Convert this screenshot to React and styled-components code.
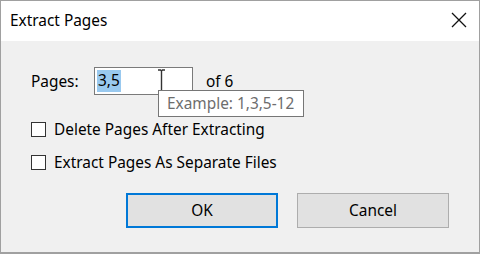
import React from "react";
import styled, { createGlobalStyle } from "styled-components";

const Global = createGlobalStyle`
  html, body { margin: 0; padding: 0; background: #ffffff; }
  body { font-family: "Noto Sans", "Open Sans", sans-serif; }
  * { box-sizing: border-box; }
`;

const Window = styled.div`
  width: 480px;
  height: 254px;
  border: 1px solid #a0a0a0;
  border-bottom: 2px solid #a0a0a0;
  display: flex;
  flex-direction: column;
  background: #f0f0f0;
  overflow: hidden;
`;

const TitleBar = styled.div`
  height: 40px;
  flex: none;
  background: #ffffff;
  display: flex;
  align-items: center;
  justify-content: space-between;
  padding: 0 12px 0 9px;
`;

const Title = styled.span`
  font-size: 15.4px;
  color: #000;
  margin-top: -2px;
`;

const CloseButton = styled.div`
  width: 16px;
  height: 16px;
  display: flex;
  align-items: center;
  justify-content: center;
  margin-top: -2px;
`;

const Body = styled.div`
  flex: 1;
  display: flex;
  flex-direction: column;
  padding: 26px 30px 0 29px;
  font-size: 15.4px;
  color: #000;
`;

const PagesRow = styled.div`
  display: flex;
  align-items: center;
  height: 28px;
`;

const Label = styled.span`
  width: 64px;
  padding-left: 1px;
`;

const InputWrap = styled.div`
  position: relative;
  width: 99px;
  height: 28px;
  border: 1px solid #7a7a7a;
  background: #fff;
  display: flex;
  align-items: center;
  padding-left: 2px;
`;

const Selected = styled.span`
  background: #99c9ef;
  color: #000;
  padding: 1px 1px 2px 1px;
  line-height: 19px;
`;

const Cursor = styled.svg`
  position: absolute;
  left: 62px;
  top: 1px;
`;

const Tooltip = styled.div`
  position: absolute;
  left: 63px;
  top: 22px;
  width: 146px;
  height: 27px;
  background: #ffffff;
  border: 1px solid #767676;
  color: #6d6d6d;
  font-size: 15.4px;
  display: flex;
  align-items: center;
  padding-left: 8px;
  white-space: nowrap;
  z-index: 2;
`;

const Suffix = styled.span`
  margin-left: 13px;
`;

const CheckRow = styled.label`
  display: flex;
  align-items: center;
  gap: 8px;
  height: 20px;
  margin-top: ${(p) => p.$top}px;
`;

const Box = styled.span`
  width: 15px;
  height: 15px;
  border: 1px solid #333333;
  background: #ffffff;
  flex: none;
  margin-left: 1px;
`;

const Buttons = styled.div`
  display: flex;
  justify-content: flex-end;
  gap: 19px;
  margin-top: 21px;
`;

const Button = styled.div`
  width: 152px;
  height: 35px;
  background: #e1e1e1;
  border: ${(p) => (p.$default ? "2px solid #0078d7" : "1px solid #adadad")};
  display: flex;
  align-items: center;
  justify-content: center;
  font-size: 15.4px;
  color: #000;
`;

export default function App() {
  return (
    <>
      <Global />
      <Window>
        <TitleBar>
          <Title>Extract Pages</Title>
          <CloseButton>
            <svg width="16" height="16" viewBox="0 0 16 16">
              <path d="M1 1 L15 15 M15 1 L1 15" stroke="#111" strokeWidth="1.3" fill="none" />
            </svg>
          </CloseButton>
        </TitleBar>
        <Body>
          <PagesRow>
            <Label>Pages:</Label>
            <InputWrap>
              <Selected>3,5</Selected>
              <Cursor width="9" height="24" viewBox="0 0 9 24">
                <path d="M1 1 H3.5 L4.5 2 L5.5 1 H8 M4.5 2 V22 M1 23 H3.5 L4.5 22 L5.5 23 H8" stroke="#333" strokeWidth="1.4" fill="none" />
              </Cursor>
              <Tooltip>Example: 1,3,5-12</Tooltip>
            </InputWrap>
            <Suffix>of 6</Suffix>
          </PagesRow>
          <CheckRow $top={24}>
            <Box />
            <span>Delete Pages After Extracting</span>
          </CheckRow>
          <CheckRow $top={13}>
            <Box />
            <span>Extract Pages As Separate Files</span>
          </CheckRow>
          <Buttons>
            <Button $default>OK</Button>
            <Button>Cancel</Button>
          </Buttons>
        </Body>
      </Window>
    </>
  );
}
